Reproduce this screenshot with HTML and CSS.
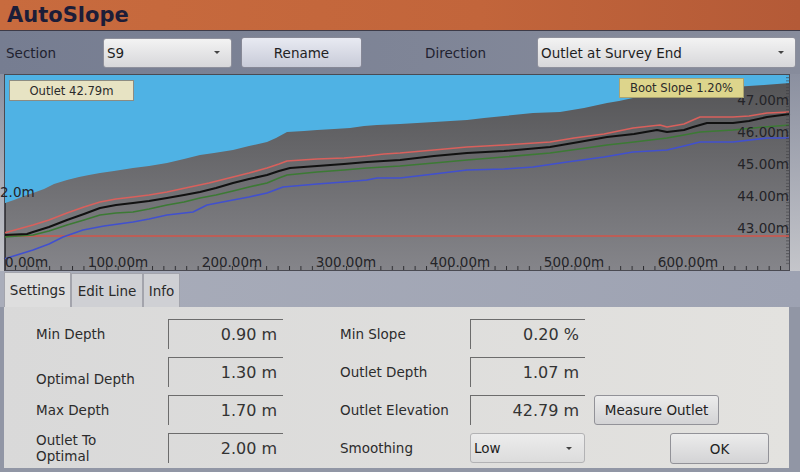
FILE: index.html
```html
<!DOCTYPE html>
<html lang="en">
<head>
  <meta charset="UTF-8">
  <title>AutoSlope</title>
  <link rel="stylesheet" href="styles.css">
</head>
<body>
  <header class="titlebar">
    <h1>AutoSlope</h1>
  </header>

  <div class="toolbar">
    <span class="tb-label">Section</span>
    <div class="combo combo-section"><span>S9</span><span class="arrow"></span></div>
    <button class="btn btn-rename">Rename</button>
    <span class="tb-label tb-direction">Direction</span>
    <div class="combo combo-direction"><span>Outlet at Survey End</span><span class="arrow"></span></div>
  </div>

  <div class="chart-row">
    <div class="chart">
      <svg class="plot" width="786" height="197" viewBox="0 0 786 197">
        <defs>
          <linearGradient id="ground" x1="0" y1="0" x2="0" y2="1">
            <stop offset="0" stop-color="#555557"/>
            <stop offset="1" stop-color="#85858a"/>
          </linearGradient>
          <pattern id="xticks" x="-0.5" y="191" width="11.42" height="6" patternUnits="userSpaceOnUse">
            <rect x="0" y="1" width="1" height="5" fill="#2e2e32"/>
          </pattern>
          <pattern id="yticks" x="782" y="0" width="4" height="3.2" patternUnits="userSpaceOnUse">
            <rect x="0" y="0" width="4" height="1" fill="#3a3a3e" fill-opacity="0.6"/>
          </pattern>
        </defs>
        <rect width="786" height="197" fill="#4fb2e4"/>
        <polygon fill="url(#ground)" points="0,130 1,129 10,126 20,122 29,119 40,115 50,110 63,106 75,103 85,101 96,99 110,97 129,94 145,92 163,89 180,85 196,81 210,79 229,76 245,72 263,68 272,64 283,58 300,57 313,56 330,55 346,54 360,52 373,51 396,50 430,48 463,46 480,44 500,42 529,39 556,38 580,34 603,29 615,27 629,24 660,21 690,17 729,13 760,11 786,9 786,197 0,197"/>
        <line x1="0" y1="162" x2="786" y2="162" stroke="#d2544a" stroke-width="1.5"/>
        <line x1="1.5" y1="129" x2="1.5" y2="197" stroke="#3a3a3e" stroke-width="1"/>
        <polyline class="ln ln-red" points="0,159 29,151 45,146 63,139 80,133 96,128 112,125 129,123 145,121 163,118 186,113 205,109 229,103 245,99 263,94 275,90 283,87 313,85 340,84 363,82 380,80 396,79 430,76 463,73 500,71 546,68 570,64 600,60 629,54 656,51 663,53 680,50 689,46 696,43 729,43 745,42 763,39 786,38"/>
        <polyline class="ln ln-green" points="0,163 29,161 45,157 63,151 80,146 96,141 112,139 129,138 145,135 163,131 180,128 196,124 212,121 229,117 245,113 263,109 275,104 283,101 313,98 340,96 363,94 396,92 430,89 463,86 500,83 546,79 575,75 603,71 630,68 663,64 680,61 696,58 729,56 760,53 786,51"/>
        <polyline class="ln ln-blue" points="0,185 29,176 45,170 59,163 79,156 100,152 129,148 145,145 163,141 189,138 203,131 229,126 245,123 263,119 279,113 313,110 340,108 363,106 373,104 396,104 430,100 463,96 500,95 529,93 563,88 600,83 629,78 663,76 680,72 696,68 729,68 763,64 786,64"/>
        <polyline class="ln ln-black" points="0,161 23,160 29,158 45,153 63,146 80,140 96,134 112,131 129,129 145,127 163,124 180,121 196,118 212,114 229,109 245,105 263,101 275,97 286,94 313,92 340,90 363,88 396,86 430,82 463,79 500,77 546,73 575,68 603,63 630,60 653,56 663,58 680,56 689,53 703,49 729,49 745,47 763,43 786,40"/>
        <rect x="0" y="191" width="786" height="6" fill="url(#xticks)"/>
        <rect x="782" y="0" width="4" height="191" fill="url(#yticks)"/>
        <rect x="0.5" y="0.5" width="785" height="196" fill="none" stroke="#4a4a52"/>

        <g class="axis">
          <text x="785" y="31" text-anchor="end">47.00m</text>
          <text x="785" y="63" text-anchor="end">46.00m</text>
          <text x="785" y="95" text-anchor="end">45.00m</text>
          <text x="785" y="127" text-anchor="end">44.00m</text>
          <text x="785" y="159" text-anchor="end">43.00m</text>
          <text x="-4" y="123">2.0m</text>
          <text x="1" y="193">0.00m</text>
          <text x="114" y="193" text-anchor="middle">100.00m</text>
          <text x="228" y="193" text-anchor="middle">200.00m</text>
          <text x="342" y="193" text-anchor="middle">300.00m</text>
          <text x="456" y="193" text-anchor="middle">400.00m</text>
          <text x="570" y="193" text-anchor="middle">500.00m</text>
          <text x="684" y="193" text-anchor="middle">600.00m</text>
        </g>
      </svg>
      <div class="badge badge-outlet">Outlet 42.79m</div>
      <div class="badge badge-boot">Boot Slope 1.20%</div>
    </div>
  </div>

  <div class="tabs">
    <div class="tab tab-settings active">Settings</div>
    <div class="tab tab-edit">Edit Line</div>
    <div class="tab tab-info">Info</div>
  </div>

  <div class="panel">
    <span class="label">Min Depth</span>
    <div class="field">0.90 m</div>
    <span class="label label-r">Min Slope</span>
    <div class="field">0.20 %</div>
    <span></span>

    <span class="label low">Optimal Depth</span>
    <div class="field">1.30 m</div>
    <span class="label label-r">Outlet Depth</span>
    <div class="field">1.07 m</div>
    <span></span>

    <span class="label">Max Depth</span>
    <div class="field">1.70 m</div>
    <span class="label label-r">Outlet Elevation</span>
    <div class="field">42.79 m</div>
    <button class="btn btn-measure">Measure Outlet</button>

    <span class="label two-line">Outlet To<br>Optimal</span>
    <div class="field">2.00 m</div>
    <span class="label label-r">Smoothing</span>
    <div class="combo combo-low"><span>Low</span><span class="arrow"></span></div>
    <button class="btn btn-ok">OK</button>
  </div>
</body>
</html>
```

FILE: styles.css
```css
body {
  margin: 0;
  width: 800px;
  height: 472px;
  overflow: hidden;
  background: #9196a5;
  font-family: "DejaVu Sans", "Liberation Sans", sans-serif;
  color: #2a2a2a;
}
.titlebar {
  height: 30px;
  display: flex;
  align-items: center;
  padding-left: 7px;
  background: linear-gradient(90deg, #c86b3e, #c2653b 60%, #b45a37);
  border-bottom: 1px solid #3d3b48;
}
.titlebar h1 {
  margin: 0;
  font-size: 21px;
  line-height: 1;
  font-weight: bold;
  color: #1c1d38;
}
.toolbar {
  height: 43px;
  display: flex;
  align-items: center;
  padding-left: 6px;
  background: linear-gradient(90deg, #767d91, #878c9c);
}
.tb-label {
  width: 97px;
  flex: none;
  font-size: 13.5px;
  color: #1f2230;
}
.tb-direction {
  margin-left: 63px;
  width: 112px;
}
.combo {
  box-sizing: border-box;
  height: 30px;
  flex: none;
  display: flex;
  align-items: center;
  justify-content: space-between;
  padding: 0 11px 0 3px;
  background: linear-gradient(#f3f3f3, #d7d7da);
  border: 1px solid #8e909c;
  border-radius: 3px;
  font-size: 13.5px;
  color: #1e1e1e;
}
.arrow {
  width: 0;
  height: 0;
  border-left: 3px solid transparent;
  border-right: 3px solid transparent;
  border-top: 3px solid #444;
}
.combo-section {
  width: 129px;
}
.combo-direction {
  width: 259px;
  height: 31px;
}
.btn {
  box-sizing: border-box;
  font-family: inherit;
  font-size: 13.5px;
  color: #222;
  background: linear-gradient(#ececec, #d3d3d5);
  border: 1px solid #929298;
  border-radius: 3px;
  padding: 0;
}
.btn-rename {
  margin-left: 9px;
  width: 121px;
  height: 31px;
  background: linear-gradient(#e8eaf2, #c8cbd8);
  border-color: #868896;
}
.chart-row {
  height: 197px;
  padding-left: 4px;
  background: linear-gradient(#8b90a0, #c4c5ca);
}
.chart {
  position: relative;
  width: 786px;
  height: 197px;
}
.plot {
  display: block;
  overflow: visible;
}
.ln {
  fill: none;
  stroke-width: 1.6;
  stroke-linejoin: round;
}
.ln-red { stroke: #d9605c; }
.ln-black { stroke: #111; stroke-width: 2; }
.ln-green { stroke: #3c7a34; }
.ln-blue { stroke: #4150cf; }
.axis text {
  font-family: "DejaVu Sans", sans-serif;
  font-size: 13.5px;
  fill: #242428;
}
.badge {
  position: absolute;
  box-sizing: border-box;
  width: 125px;
  display: flex;
  align-items: center;
  justify-content: center;
  font-size: 11.6px;
  color: #2a2a2a;
}
.badge-outlet {
  left: 5px;
  top: 6px;
  height: 21px;
  background: #e7e3c3;
  border: 1px solid #8c8c82;
}
.badge-boot {
  left: 615px;
  top: 4px;
  height: 20px;
  background: #ddd58c;
  border: 1px solid #aaa372;
}
.tabs {
  height: 36px;
  display: flex;
  align-items: flex-end;
  padding-left: 4px;
  background: linear-gradient(90deg, #a9adba, #9da2b2);
}
.tab {
  box-sizing: border-box;
  height: 34px;
  display: flex;
  align-items: center;
  justify-content: center;
  font-size: 13.5px;
  color: #2a2a2a;
  background: #cfd0d4;
  border: 1px solid #a3a4ac;
  border-bottom: none;
}
.tab.active {
  height: 35px;
  background: #dedede;
}
.tab-settings { width: 67px; }
.tab-edit { width: 72px; }
.tab-info { width: 37px; }
.panel {
  box-sizing: border-box;
  margin-left: 4px;
  width: 785px;
  height: 161px;
  padding: 12px 0 0 32px;
  display: grid;
  grid-template-columns: 132px 115px 187px 115px 1fr;
  grid-auto-rows: 30px;
  row-gap: 8px;
  background: linear-gradient(90deg, #d9d9d9, #e3e2df);
}
.label {
  align-self: center;
  font-size: 13.5px;
  line-height: 16px;
  color: #2c2c2c;
}
.label.low {
  align-self: end;
}
.label-r {
  padding-left: 57px;
}
.field {
  box-sizing: border-box;
  border-top: 1px solid #6c6c6c;
  border-left: 1px solid #6c6c6c;
  text-align: right;
  padding-right: 6px;
  font-size: 16px;
  line-height: 29px;
  color: #333;
}
.combo-low {
  width: 115px;
  background: linear-gradient(#ececec, #dcdcdc);
  border-color: #b2b2b4;
  padding-right: 12px;
}
.btn-measure {
  margin-left: 9px;
  width: 125px;
  height: 30px;
}
.btn-ok {
  margin-left: 85px;
  width: 99px;
  height: 31px;
}
```
